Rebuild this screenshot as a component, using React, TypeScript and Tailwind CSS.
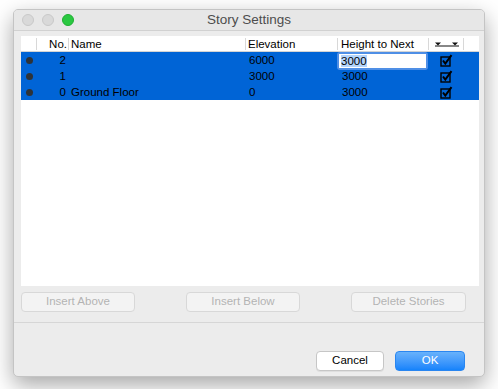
const rows = [
  { no: "2", name: "", elev: "6000", next: "3000", editing: true },
  { no: "1", name: "", elev: "3000", next: "3000", editing: false },
  { no: "0", name: "Ground Floor", elev: "0", next: "3000", editing: false },
];

function Check() {
  return (
    <svg width="13" height="13" viewBox="0 0 13 13">
      <rect x="1" y="3" width="9" height="9" fill="none" stroke="#000" strokeWidth="1.4" />
      <path d="M3 6.5 L5.3 9.6 L11.5 1.2" fill="none" stroke="#000" strokeWidth="2" />
    </svg>
  );
}

function Sep() {
  return <span className="absolute right-0 top-[2px] h-[12px] w-px bg-[#d8d8d8]" />;
}

export default function App() {
  return (
    <div
      className="w-[498px] h-[389px] bg-white overflow-hidden pt-[9px] pl-[13px]"
      style={{ fontFamily: '"Liberation Sans", Arial, sans-serif' }}
    >
      <div className="w-[472px] h-[368px] rounded-[5px] border border-[#c4c4c4] bg-[#ececec] shadow-[0_8px_22px_rgba(0,0,0,0.35)] flex flex-col overflow-hidden">
        {/* title bar */}
        <div className="relative h-[21px] flex items-center bg-[#e7e7e7] border-b border-[#d1d1d1]">
          <div className="flex items-center gap-[8px] pl-[8px]">
            <span className="w-[12px] h-[12px] rounded-full bg-[#d9d9d9] border border-[#c8c8c8]" />
            <span className="w-[12px] h-[12px] rounded-full bg-[#d9d9d9] border border-[#c8c8c8]" />
            <span className="w-[12px] h-[12px] rounded-full bg-[#2ac841] border border-[#1fae32]" />
          </div>
          <div className="absolute inset-0 flex items-center justify-center text-[13.5px] text-[#4d4d4d]">
            Story Settings
          </div>
        </div>

        {/* table */}
        <div className="mt-[5px] ml-[7px] w-[458px] h-[250px] bg-white">
          <div className="flex h-[16px] border-b border-[#d4d4d4] text-[11.5px] text-black leading-[17px]">
            <div className="relative w-[16px]"><Sep /></div>
            <div className="relative w-[32px] text-right pr-[2px]">No.<Sep /></div>
            <div className="relative w-[177px] pl-[2px]">Name<Sep /></div>
            <div className="relative w-[92px] pl-[2px]">Elevation<Sep /></div>
            <div className="relative w-[91px] pl-[3px]">Height to Next<Sep /></div>
            <div className="relative w-[35px] flex items-center justify-center">
              <svg width="26" height="10" viewBox="0 0 26 10">
                <path d="M1 3.5 L7 3.5 L4 6.5 Z M18 3.5 L24 3.5 L21 6.5 Z" fill="#111" />
                <rect x="1" y="6.5" width="24" height="1" fill="#111" />
              </svg>
              <Sep />
            </div>
            <div className="w-[15px]" />
          </div>
          {rows.map((r) => (
            <div key={r.no} className="flex h-[16px] bg-[#0064d6] text-[11.5px] text-black leading-[17px]">
              <div className="w-[16px] flex items-center justify-center">
                <span className="w-[7px] h-[7px] rounded-full bg-[#2e3338]" />
              </div>
              <div className="w-[32px] text-right pr-[3px]">{r.no}</div>
              <div className="w-[177px] pl-[2px]">{r.name}</div>
              <div className="w-[92px] pl-[3px]">{r.elev}</div>
              <div className="w-[91px] relative">
                {r.editing ? (
                  <div className="absolute left-[-1px] top-0 w-[91px] h-[18px] rounded-[3px] bg-[#4f8fe6] p-[2px] z-10">
                    <div className="h-[14px] bg-white pl-[2px] leading-[15px]">
                      <span className="bg-[#b3d4fc]">{r.next}</span>
                    </div>
                  </div>
                ) : (
                  <span className="pl-[4px]">{r.next}</span>
                )}
              </div>
              <div className="w-[35px] flex items-center justify-center">
                <Check />
              </div>
              <div className="w-[15px]" />
            </div>
          ))}
        </div>

        {/* action buttons */}
        <div className="flex mt-[6px] ml-[7px] gap-[51px] text-[11.5px] text-[#b3b3b3]">
          <div className="w-[114px] h-[20px] rounded-[4px] border border-[#d8d8d8] bg-[#f3f3f3] flex items-center justify-center">Insert Above</div>
          <div className="w-[114px] h-[20px] rounded-[4px] border border-[#d8d8d8] bg-[#f3f3f3] flex items-center justify-center">Insert Below</div>
          <div className="w-[115px] h-[20px] rounded-[4px] border border-[#d8d8d8] bg-[#f3f3f3] flex items-center justify-center">Delete Stories</div>
        </div>

        <div className="mt-[10px] h-px bg-[#d6d6d6]" />

        <div className="flex justify-end gap-[11px] mt-[28px] pr-[19px] text-[11.5px]">
          <div className="w-[68px] h-[20px] rounded-[4px] border border-[#c6c6c6] bg-white text-black flex items-center justify-center shadow-[0_1px_0_rgba(0,0,0,0.06)]">Cancel</div>
          <div className="w-[70px] h-[20px] rounded-[4px] bg-gradient-to-b from-[#68b2fb] to-[#1483fb] border border-[#2a86f0] text-white flex items-center justify-center">OK</div>
        </div>
      </div>
    </div>
  );
}
